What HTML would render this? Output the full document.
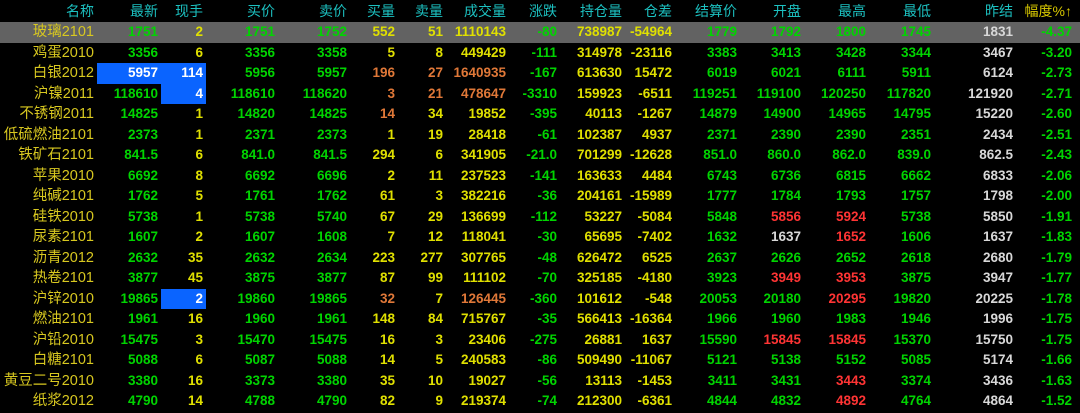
<!DOCTYPE html>
<html><head><meta charset="utf-8"><style>
*{margin:0;padding:0;box-sizing:border-box}
body{width:1080px;height:413px;background:#000;overflow:hidden;font-family:"Liberation Sans","Noto Sans CJK SC",sans-serif;font-weight:bold;font-size:13.5px}
table{border-collapse:collapse;table-layout:fixed;width:1080px}
td{text-align:right;padding:0 3px 0 0;white-space:nowrap;overflow:hidden;color:#00d400;height:20.5px;line-height:20px}
tr.h td{height:22px;color:#1cc0c0;font-size:14px;font-weight:normal;line-height:22px}
tr.h td.fy{color:#d8c800}
td:first-child{color:#d8c820;font-weight:normal;font-size:14.5px;padding-right:3px}
tr.h td:first-child{color:#1cc0c0}
tr.sel td{background:#626262}
.y{color:#e0e000}.o{color:#e07838}.r{color:#ff3434}.w{color:#d8d8d8}
.b{background:#0a64ff;color:#fff}
</style></head><body>
<table>
<colgroup><col style="width:97px"><col style="width:64px"><col style="width:45px"><col style="width:72px"><col style="width:72px"><col style="width:48px"><col style="width:48px"><col style="width:63px"><col style="width:51px"><col style="width:65px"><col style="width:50px"><col style="width:65px"><col style="width:64px"><col style="width:65px"><col style="width:65px"><col style="width:82px"><col style="width:59px"><col style="width:5px"></colgroup>
<tr class="h"><td>名称</td><td>最新</td><td>现手</td><td>买价</td><td>卖价</td><td>买量</td><td>卖量</td><td>成交量</td><td>涨跌</td><td>持仓量</td><td>仓差</td><td>结算价</td><td>开盘</td><td>最高</td><td>最低</td><td>昨结</td><td class="fy">幅度%↑</td><td></td></tr>
<tr class="sel"><td>玻璃2101</td><td>1751</td><td class="y">2</td><td>1751</td><td>1752</td><td class="y">552</td><td class="y">51</td><td class="y">1110143</td><td>-80</td><td class="y">738987</td><td class="y">-54964</td><td>1779</td><td>1792</td><td>1800</td><td>1745</td><td class="w">1831</td><td>-4.37</td><td></td></tr>
<tr><td>鸡蛋2010</td><td>3356</td><td class="y">6</td><td>3356</td><td>3358</td><td class="y">5</td><td class="y">8</td><td class="y">449429</td><td>-111</td><td class="y">314978</td><td class="y">-23116</td><td>3383</td><td>3413</td><td>3428</td><td>3344</td><td class="w">3467</td><td>-3.20</td><td></td></tr>
<tr><td>白银2012</td><td class="b">5957</td><td class="b">114</td><td>5956</td><td>5957</td><td class="o">196</td><td class="o">27</td><td class="o">1640935</td><td>-167</td><td class="y">613630</td><td class="y">15472</td><td>6019</td><td>6021</td><td>6111</td><td>5911</td><td class="w">6124</td><td>-2.73</td><td></td></tr>
<tr><td>沪镍2011</td><td>118610</td><td class="b">4</td><td>118610</td><td>118620</td><td class="o">3</td><td class="o">21</td><td class="o">478647</td><td>-3310</td><td class="y">159923</td><td class="y">-6511</td><td>119251</td><td>119100</td><td>120250</td><td>117820</td><td class="w">121920</td><td>-2.71</td><td></td></tr>
<tr><td>不锈钢2011</td><td>14825</td><td class="y">1</td><td>14820</td><td>14825</td><td class="o">14</td><td class="y">34</td><td class="y">19852</td><td>-395</td><td class="y">40113</td><td class="y">-1267</td><td>14879</td><td>14900</td><td>14965</td><td>14795</td><td class="w">15220</td><td>-2.60</td><td></td></tr>
<tr><td>低硫燃油2101</td><td>2373</td><td class="y">1</td><td>2371</td><td>2373</td><td class="y">1</td><td class="y">19</td><td class="y">28418</td><td>-61</td><td class="y">102387</td><td class="y">4937</td><td>2371</td><td>2390</td><td>2390</td><td>2351</td><td class="w">2434</td><td>-2.51</td><td></td></tr>
<tr><td>铁矿石2101</td><td>841.5</td><td class="y">6</td><td>841.0</td><td>841.5</td><td class="y">294</td><td class="y">6</td><td class="y">341905</td><td>-21.0</td><td class="y">701299</td><td class="y">-12628</td><td>851.0</td><td>860.0</td><td>862.0</td><td>839.0</td><td class="w">862.5</td><td>-2.43</td><td></td></tr>
<tr><td>苹果2010</td><td>6692</td><td class="y">8</td><td>6692</td><td>6696</td><td class="y">2</td><td class="y">11</td><td class="y">237523</td><td>-141</td><td class="y">163633</td><td class="y">4484</td><td>6743</td><td>6736</td><td>6815</td><td>6662</td><td class="w">6833</td><td>-2.06</td><td></td></tr>
<tr><td>纯碱2101</td><td>1762</td><td class="y">5</td><td>1761</td><td>1762</td><td class="y">61</td><td class="y">3</td><td class="y">382216</td><td>-36</td><td class="y">204161</td><td class="y">-15989</td><td>1777</td><td>1784</td><td>1793</td><td>1757</td><td class="w">1798</td><td>-2.00</td><td></td></tr>
<tr><td>硅铁2010</td><td>5738</td><td class="y">1</td><td>5738</td><td>5740</td><td class="y">67</td><td class="y">29</td><td class="y">136699</td><td>-112</td><td class="y">53227</td><td class="y">-5084</td><td>5848</td><td class="r">5856</td><td class="r">5924</td><td>5738</td><td class="w">5850</td><td>-1.91</td><td></td></tr>
<tr><td>尿素2101</td><td>1607</td><td class="y">2</td><td>1607</td><td>1608</td><td class="y">7</td><td class="y">12</td><td class="y">118041</td><td>-30</td><td class="y">65695</td><td class="y">-7402</td><td>1632</td><td class="w">1637</td><td class="r">1652</td><td>1606</td><td class="w">1637</td><td>-1.83</td><td></td></tr>
<tr><td>沥青2012</td><td>2632</td><td class="y">35</td><td>2632</td><td>2634</td><td class="y">223</td><td class="y">277</td><td class="y">307765</td><td>-48</td><td class="y">626472</td><td class="y">6525</td><td>2637</td><td>2626</td><td>2652</td><td>2618</td><td class="w">2680</td><td>-1.79</td><td></td></tr>
<tr><td>热卷2101</td><td>3877</td><td class="y">45</td><td>3875</td><td>3877</td><td class="y">87</td><td class="y">99</td><td class="y">111102</td><td>-70</td><td class="y">325185</td><td class="y">-4180</td><td>3923</td><td class="r">3949</td><td class="r">3953</td><td>3875</td><td class="w">3947</td><td>-1.77</td><td></td></tr>
<tr><td>沪锌2010</td><td>19865</td><td class="b">2</td><td>19860</td><td>19865</td><td class="o">32</td><td class="y">7</td><td class="o">126445</td><td>-360</td><td class="y">101612</td><td class="y">-548</td><td>20053</td><td>20180</td><td class="r">20295</td><td>19820</td><td class="w">20225</td><td>-1.78</td><td></td></tr>
<tr><td>燃油2101</td><td>1961</td><td class="y">16</td><td>1960</td><td>1961</td><td class="y">148</td><td class="y">84</td><td class="y">715767</td><td>-35</td><td class="y">566413</td><td class="y">-16364</td><td>1966</td><td>1960</td><td>1983</td><td>1946</td><td class="w">1996</td><td>-1.75</td><td></td></tr>
<tr><td>沪铅2010</td><td>15475</td><td class="y">3</td><td>15470</td><td>15475</td><td class="y">16</td><td class="y">3</td><td class="y">23406</td><td>-275</td><td class="y">26881</td><td class="y">1637</td><td>15590</td><td class="r">15845</td><td class="r">15845</td><td>15370</td><td class="w">15750</td><td>-1.75</td><td></td></tr>
<tr><td>白糖2101</td><td>5088</td><td class="y">6</td><td>5087</td><td>5088</td><td class="y">14</td><td class="y">5</td><td class="y">240583</td><td>-86</td><td class="y">509490</td><td class="y">-11067</td><td>5121</td><td>5138</td><td>5152</td><td>5085</td><td class="w">5174</td><td>-1.66</td><td></td></tr>
<tr><td>黄豆二号2010</td><td>3380</td><td class="y">16</td><td>3373</td><td>3380</td><td class="y">35</td><td class="y">10</td><td class="y">19027</td><td>-56</td><td class="y">13113</td><td class="y">-1453</td><td>3411</td><td>3431</td><td class="r">3443</td><td>3374</td><td class="w">3436</td><td>-1.63</td><td></td></tr>
<tr><td>纸浆2012</td><td>4790</td><td class="y">14</td><td>4788</td><td>4790</td><td class="y">82</td><td class="y">9</td><td class="y">219374</td><td>-74</td><td class="y">212300</td><td class="y">-6361</td><td>4844</td><td>4832</td><td class="r">4892</td><td>4764</td><td class="w">4864</td><td>-1.52</td><td></td></tr>
</table>
</body></html>
